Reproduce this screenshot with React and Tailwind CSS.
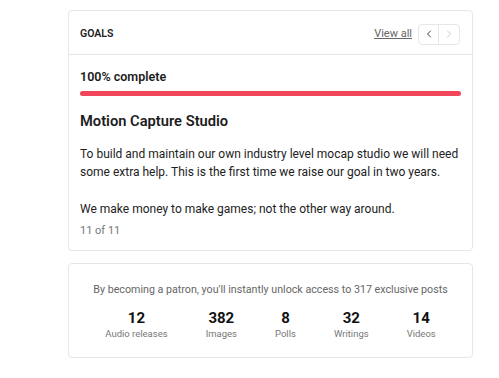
import React from "react";
import { ChevronLeft, ChevronRight } from "lucide-react";

const stats = [
  { count: 12, label: "Audio releases" },
  { count: 382, label: "Images" },
  { count: 8, label: "Polls" },
  { count: 32, label: "Writings" },
  { count: 14, label: "Videos" },
];

export default function App() {
  return (
    <div
      className="min-h-[378px] bg-white pl-[68px] pt-[10px] text-[#1c1c1c]"
      style={{ fontFamily: "Roboto, 'Noto Sans', sans-serif" }}
    >
      <div className="flex w-[405px] flex-col gap-[12px]">
        {/* Goals card */}
        <div className="rounded border border-[#e6e6e6] bg-white">
          <div className="flex h-[44px] items-center justify-between border-b border-[#e6e6e6] px-[11px] pt-[3px]">
            <span className="text-[10.5px] font-semibold">GOALS</span>
            <div className="flex items-center gap-[6px] pr-[1px]">
              <a className="text-[11px] text-[#666] underline">View all</a>
              <div className="flex h-[21px] rounded border border-[#e6e6e6]">
                <button className="flex w-[20px] items-center justify-center border-r border-[#e6e6e6]">
                  <ChevronLeft className="h-3 w-3 text-[#444]" strokeWidth={2} />
                </button>
                <button className="flex w-[20px] items-center justify-center">
                  <ChevronRight className="h-3 w-3 text-[#ccc]" strokeWidth={2} />
                </button>
              </div>
            </div>
          </div>

          <div className="px-[11px] pb-[11px] pt-[14px]">
            <p className="text-[12.5px] font-semibold leading-4">100% complete</p>
            <div className="mt-[6px] h-[5px] w-full rounded-full bg-[#f1465a]" />
            <h3 className="mt-[15px] text-[14.7px] font-semibold leading-5">
              Motion Capture Studio
            </h3>
            <p className="mt-[14px] text-[12px] leading-[18px] text-[#222]">
              To build and maintain our own industry level mocap studio we will need
              <br />
              some extra help. This is the first time we raise our goal in two years.
            </p>
            <p className="mt-[19px] text-[12px] leading-[18px] text-[#222]">
              We make money to make games; not the other way around.
            </p>
            <p className="mt-[5px] text-[11px] leading-4 text-[#777]">11 of 11</p>
          </div>
        </div>

        {/* Patron stats card */}
        <div className="flex h-[95px] flex-col items-center rounded border border-[#e6e6e6] bg-white pt-[18px]">
          <p className="whitespace-nowrap text-[10.7px] leading-4 text-[#666]">
            By becoming a patron, you'll instantly unlock access to 317 exclusive posts
          </p>
          <div className="mt-[11px] flex justify-center gap-[38px]">
            {stats.map((s) => (
              <div key={s.label} className="flex flex-col items-center">
                <span className="text-[15px] font-bold leading-[18px] text-[#111]">{s.count}</span>
                <span className="text-[9.5px] leading-[14px] text-[#777]">{s.label}</span>
              </div>
            ))}
          </div>
        </div>
      </div>
    </div>
  );
}
